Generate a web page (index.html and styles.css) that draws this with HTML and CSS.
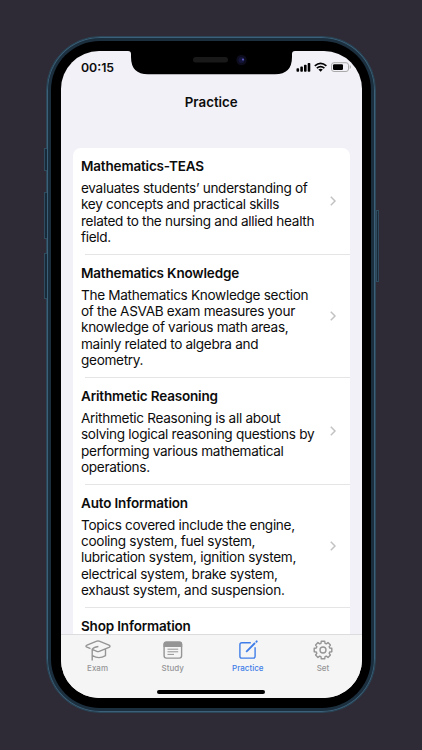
FILE: index.html
```html
<!DOCTYPE html>
<html lang="en">
  <head>
    <meta charset="UTF-8" />
    <meta name="viewport" content="width=device-width, initial-scale=1.0" />
    <title>Practice</title>
    <link rel="stylesheet" href="styles.css">
  </head>
  <body>
    <div class="phone">
      <span class="side-button mute"></span>
      <span class="side-button volume-up"></span>
      <span class="side-button volume-down"></span>
      <span class="side-button power"></span>
      <div class="bezel">
        <div class="screen">
          <svg class="notch" width="167" height="24" viewBox="0 0 167 24">
            <path d="M0 0H167Q164 0 164 3V6Q164 23.3 147 23.3H20Q3 23.3 3 6V3Q3 0 0 0Z" fill="#000" />
            <rect x="65" y="6" width="35" height="5.5" rx="2.7" fill="#191919" />
            <circle cx="113.5" cy="9" r="5.2" fill="#0c0c1c" />
            <circle cx="113.5" cy="9" r="3" fill="#15153b" />
            <circle cx="115" cy="8.6" r="1.1" fill="#5555b5" />
          </svg>
          <header class="status-bar">
            <span class="time">00:15</span>
            <svg width="56" height="12" viewBox="0 0 56 12">
              <g fill="#000">
                <rect x="0.5" y="7.3" width="2.6" height="3.5" rx="0.8" />
                <rect x="4.3" y="5.6" width="2.6" height="5.2" rx="0.8" />
                <rect x="8" y="3.8" width="2.6" height="7" rx="0.8" />
                <rect x="11.7" y="2" width="2.6" height="8.8" rx="0.8" />
                <path d="M22.4 8.4Q24.6 6.9 26.8 8.4L24.6 10.8Z" />
              </g>
              <path d="M18.8 4.9Q24.6 0 30.4 4.9M20.8 7.1Q24.6 4 28.4 7.1" fill="none" stroke="#000" stroke-width="1.7" />
              <rect x="35.5" y="1.7" width="17" height="8.8" rx="2.5" fill="none" stroke="#aaa" />
              <rect x="37" y="3.2" width="10" height="5.8" rx="1.2" fill="#000" />
              <path d="M54 4.5Q55.5 6 54 7.5Z" fill="#aaa" stroke="#aaa" stroke-width="0.5" />
            </svg>
          </header>
          <h1>Practice</h1>
          <main class="list">
            <a class="row">
              <div class="row-text">
                <h2>Mathematics-TEAS</h2>
                <p>evaluates students’ understanding of<br>key concepts and practical skills<br>related to the nursing and allied health<br>field.</p>
              </div>
              <svg class="chevron" viewBox="0 0 6 10"><path d="M0.8 0.8L5 5L0.8 9.2" /></svg>
            </a>
            <a class="row">
              <div class="row-text">
                <h2>Mathematics Knowledge</h2>
                <p>The Mathematics Knowledge section<br>of the ASVAB exam measures your<br>knowledge of various math areas,<br>mainly related to algebra and<br>geometry.</p>
              </div>
              <svg class="chevron" viewBox="0 0 6 10"><path d="M0.8 0.8L5 5L0.8 9.2" /></svg>
            </a>
            <a class="row">
              <div class="row-text">
                <h2>Arithmetic Reasoning</h2>
                <p>Arithmetic Reasoning is all about<br>solving logical reasoning questions by<br>performing various mathematical<br>operations.</p>
              </div>
              <svg class="chevron" viewBox="0 0 6 10"><path d="M0.8 0.8L5 5L0.8 9.2" /></svg>
            </a>
            <a class="row">
              <div class="row-text">
                <h2>Auto Information</h2>
                <p>Topics covered include the engine,<br>cooling system, fuel system,<br>lubrication system, ignition system,<br>electrical system, brake system,<br>exhaust system, and suspension.</p>
              </div>
              <svg class="chevron" viewBox="0 0 6 10"><path d="M0.8 0.8L5 5L0.8 9.2" /></svg>
            </a>
            <a class="row">
              <div class="row-text">
                <h2>Shop Information</h2>
              </div>
            </a>
          </main>
          <nav class="tab-bar">
            <a class="tab">
              <svg viewBox="0 0 26 24">
                <path d="M1 8.2Q1 7.5 2 7.1L11.8 3.2Q13 2.8 14.2 3.2L24 7.1Q26 8.2 24 9.3L14.2 13.4Q13 13.9 11.8 13.4L7.2 11.4V22.5M5.5 10.6L2 9.2Q1 8.8 1 8.2M7.2 11.4Q8.2 9.2 13.4 8.5M7.5 17.6Q14 21.6 20.5 17.6V11.5" />
              </svg>
              <span>Exam</span>
            </a>
            <a class="tab">
              <svg viewBox="0 0 26 24">
                <rect x="4.1" y="4.3" width="17.5" height="15.8" rx="2.3" />
                <path class="solid" d="M3.5 9V6Q3.5 3.6 6 3.6H19.7Q22.2 3.6 22.2 6V9Z" />
                <path d="M7.5 11.2H18.2M7.5 13.8H18.2M7.5 16.4H14" stroke-width="1" />
              </svg>
              <span>Study</span>
            </a>
            <a class="tab active">
              <svg viewBox="0 0 26 24">
                <path d="M15.8 4.8H6.8Q4.9 4.8 4.9 6.7V18.2Q4.9 20.1 6.8 20.1H18.2Q20.1 20.1 20.1 18.2V9.3" />
                <path d="M11.2 13.8L20 5" stroke-width="1.8" />
                <path d="M21.4 3.7L21.7 3.4" stroke-width="2" stroke-linecap="round" />
              </svg>
              <span>Practice</span>
            </a>
            <a class="tab">
              <svg viewBox="-13 -12 26 24">
                <path d="M-2.05 -6.7L-1.7 -8.8H1.7L2.05 -6.7L3.29 -6.19L5.02 -7.42L7.42 -5.02L6.19 -3.29L6.7 -2.05L8.8 -1.7V1.7L6.7 2.05L6.19 3.29L7.42 5.02L5.02 7.42L3.29 6.19L2.05 6.7L1.7 8.8H-1.7L-2.05 6.7L-3.29 6.19L-5.02 7.42L-7.42 5.02L-6.19 3.29L-6.7 2.05L-8.8 1.7V-1.7L-6.7 -2.05L-6.19 -3.29L-7.42 -5.02L-5.02 -7.42L-3.29 -6.19Z" />
                <circle r="3" />
              </svg>
              <span>Set</span>
            </a>
          </nav>
          <div class="home-indicator"></div>
        </div>
      </div>
    </div>
  </body>
</html>
```
FILE: styles.css
```css
* {
  box-sizing: border-box;
}

body {
  margin: 0;
  height: 750px;
  padding: 36px 46px;
  background-color: #2e2b36;
  color: #0c0c0c;
  font-family: Inter, "Liberation Sans", sans-serif;
  overflow: hidden;
}

.phone {
  position: relative;
  width: 330px;
  height: 677px;
  padding: 4px;
  border: 1px solid #2c4657;
  border-radius: 54px;
  background-color: #1c2f3e;
  box-shadow: inset 0 0 0 1px #3b6079;
}

.bezel {
  height: 100%;
  padding: 10px 9.5px 10px 10px;
  border-radius: 49px;
  background-color: #000;
}

.screen {
  position: relative;
  display: flex;
  flex-direction: column;
  height: 647px;
  border-radius: 38px;
  background-color: #f2f1f7;
  overflow: hidden;
}

.side-button {
  position: absolute;
  left: -3px;
  width: 3px;
  border: 1px solid #2f4c60;
  border-right: 0;
  background-color: #182a38;
}

.mute {
  top: 111px;
  height: 23px;
}

.volume-up {
  top: 155px;
  height: 47px;
}

.volume-down {
  top: 216px;
  height: 46px;
}

.power {
  left: auto;
  right: -4px;
  top: 173px;
  height: 72px;
  border-right: 1px solid #2f4c60;
}

.notch {
  position: absolute;
  top: 0;
  left: 67px;
}

.status-bar {
  display: flex;
  justify-content: space-between;
  flex: none;
  height: 38px;
  padding: 10px 10px 0 20px;
}

.time {
  font-size: 12.3px;
  font-weight: 600;
  line-height: 14px;
}

h1 {
  flex: none;
  height: 59px;
  margin: 0;
  font-size: 13.3px;
  font-weight: 600;
  line-height: 26px;
  text-align: center;
}

.list {
  flex: 1;
  min-height: 0;
  margin: 0 12px;
  border-radius: 8px 8px 0 0;
  background-color: #fff;
  overflow: hidden;
}

.row {
  position: relative;
  display: flex;
  align-items: center;
  justify-content: space-between;
  padding: 8px 13.5px 9.4px 8px;
}

/* inset separator */
.row + .row::before {
  content: "";
  position: absolute;
  top: -1px;
  left: 12px;
  right: 0;
  height: 1px;
  background-color: #e5e5e7;
}

.row-text {
  white-space: nowrap;
}

h2 {
  margin: 0;
  font-size: 13.5px;
  font-weight: 600;
  letter-spacing: -0.17px;
  line-height: 20px;
}

p {
  margin: 4px 0 0;
  font-size: 13.6px;
  letter-spacing: -0.31px;
  line-height: 16.35px;
}

.chevron {
  flex: none;
  width: 6px;
  height: 10px;
  fill: none;
  stroke: #c2c2c4;
  stroke-width: 1.5;
}

.tab-bar {
  display: flex;
  flex: none;
  height: 64px;
  padding-right: 1px;
  margin-left: -1px;
  border-top: 1px solid #dcdcde;
  background-color: #f5f5f6;
}

.tab {
  display: flex;
  flex: 1;
  flex-direction: column;
  align-items: center;
  padding-top: 3px;
  color: #959596;
  font-size: 8px;
  font-weight: 500;
  line-height: 10px;
}

.tab svg {
  width: 26px;
  height: 24px;
  margin-bottom: 1px;
  fill: none;
  stroke: currentColor;
  stroke-width: 1.4;
  stroke-linejoin: round;
}

.tab .solid {
  fill: currentColor;
  stroke: none;
}

.tab.active {
  color: #3f7de8;
}

.home-indicator {
  position: absolute;
  bottom: 4px;
  left: 96px;
  width: 108px;
  height: 4px;
  border-radius: 2px;
  background-color: #000;
}
```
